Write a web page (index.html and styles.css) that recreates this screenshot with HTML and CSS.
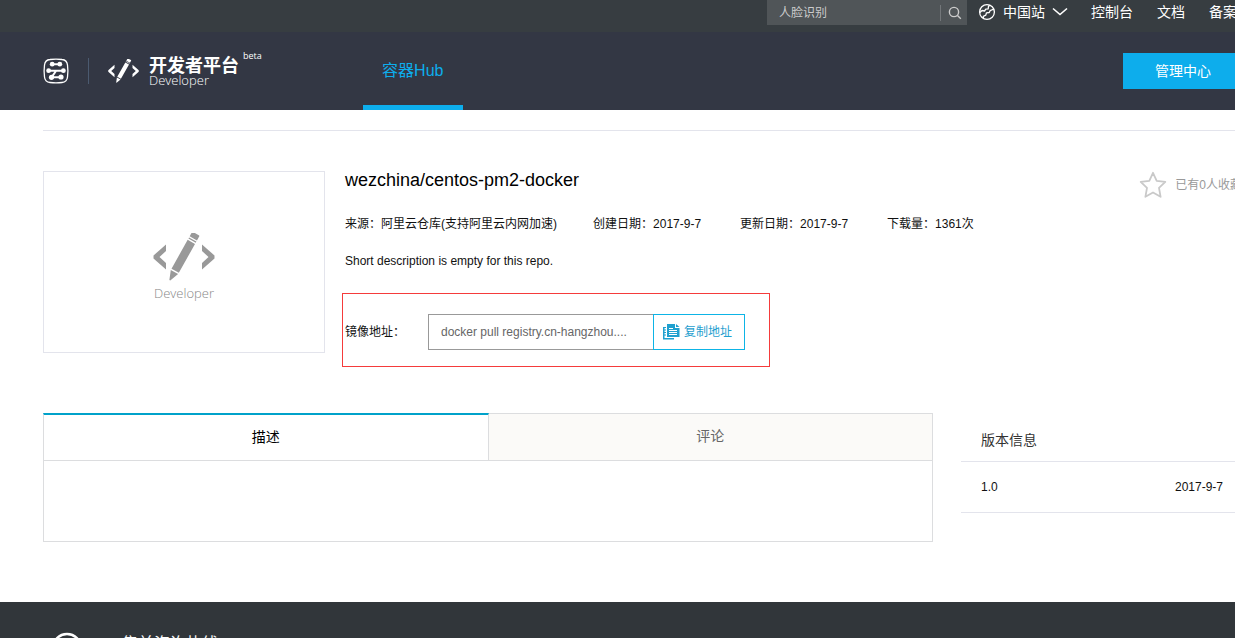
FILE: index.html
```html
<!DOCTYPE html>
<html lang="zh-CN">
<head>
<meta charset="utf-8">
<title>容器Hub - 开发者平台</title>
<link rel="stylesheet" href="styles.css">
</head>
<body>
<svg class="defs" aria-hidden="true">
  <symbol id="dev-mark" viewBox="0 0 62 48">
    <path d="M13 11.500v6.500L6.500 24l6.500 6v6.500L.5 25.500v-3zM49 11.500v6.500l6.500 6-6.500 6v6.500l12.500-11v-3z"/>
    <g transform="translate(42.500 1.500) rotate(29.300)">
      <path d="M-4.200 0q0-1 1-1h6.400q1 0 1 1V4.500h-8.400zM-4.200 5.700h8.400v1.300h-8.400zM-4.200 8.500h8.400v33h-8.400zM-4.200 43h8.400L.5 52.500h-1z"/>
    </g>
  </symbol>
</svg>
<div class="page">
  <div class="topbar">
    <form class="search">
      <input class="search-input" type="text" placeholder="人脸识别" aria-label="搜索">
      <button class="search-button" type="button" aria-label="搜索">
        <svg width="14" height="14" viewBox="0 0 14 14" fill="none" stroke="currentColor" stroke-width="1.400"><circle cx="6" cy="6" r="4.600"/><path d="M9.500 9.500l3.300 3.300"/></svg>
      </button>
    </form>
    <nav class="topnav">
      <a class="site" href="#">
        <svg width="18" height="18" viewBox="0 0 18 18" fill="none" stroke="currentColor" stroke-width="1.300" stroke-linejoin="round"><circle cx="9" cy="9" r="7.400"/><path d="M2 9.500l2-2L6.500 8l1.300-1.800 2.400-.4.300-2.600 1.500-.7M5.500 15.700l-.2-2.400 2.500-1.200.7-2.300 2.800-.3.800-1.800 3.900-1.700"/></svg>
        <span>中国站</span>
        <svg width="16" height="10" viewBox="0 0 16 10" fill="none" stroke="currentColor" stroke-width="1.600"><path d="M1 1.500l7 6 7-6"/></svg>
      </a>
      <a href="#">控制台</a>
      <a href="#">文档</a>
      <a href="#">备案</a>
    </nav>
  </div>
  <header class="header">
    <a class="cloud" href="#" aria-label="阿里云">
      <svg width="26" height="26" viewBox="0 0 26 26" fill="none" stroke="currentColor" stroke-linecap="round"><path d="M7 1.500Q13 .7 19 1.500q5 .5 5.500 5.500.8 6 0 12-.5 5-5.500 5.500-6 .8-12 0-5-.5-5.500-5.500-.8-6 0-12Q2 2 7 1.500z" stroke-width="1.300"/><path d="M9.200 6.200h7.600M5.500 12.700h15M13 13l-4.500 6.300M9 19.300h8.500" stroke-width="2"/><g fill="currentColor" stroke="none"><circle cx="9.200" cy="6.200" r="2.400"/><circle cx="16.800" cy="6.200" r="2.400"/><circle cx="5.600" cy="12.700" r="2.400"/><circle cx="20.400" cy="12.700" r="2.400"/><circle cx="8.500" cy="19.300" r="2.600"/><circle cx="18" cy="19" r="2.600"/></g></svg>
    </a>
    <a class="brand" href="#">
      <svg class="brand-mark" width="31" height="24"><use href="#dev-mark"/></svg>
      <span class="brand-text"><b>开发者平台</b><span class="brand-sub">Developer</span></span>
      <sup class="beta">beta</sup>
    </a>
    <nav class="mainnav"><a class="mainnav-item" href="#">容器Hub</a></nav>
    <a class="manage" href="#">管理中心</a>
  </header>
  <main class="main">
    <section class="repo">
      <div class="thumb">
        <svg width="62" height="48"><use href="#dev-mark"/></svg>
        <span>Developer</span>
      </div>
      <div class="info">
        <h1>wezchina/centos-pm2-docker</h1>
        <div class="meta">
          <span>来源：<span>阿里云仓库(支持阿里云内网加速)</span></span>
          <span>创建日期：<time>2017-9-7</time></span>
          <span>更新日期：<time>2017-9-7</time></span>
          <span>下载量：<span>1361次</span></span>
        </div>
        <p class="desc">Short description is empty for this repo.</p>
        <div class="address">
          <label for="address">镜像地址：</label>
          <input id="address" type="text" readonly value="docker pull registry.cn-hangzhou....">
          <button class="copy" type="button">
            <svg width="17" height="16" viewBox="0 0 17 16" fill="currentColor"><path d="M0 3h3v1H1.500v1.500H3v1H1.500V8H3v1H1.500v1.500H3v1H1.500V14H11v1.500H0zM0 3h1.500v12H0zM4 0h8v4h4.500v9H4zM13 0l3.500 3H13z"/><path d="M6 4.500h4M6 6.500h8M6 8.500h8M6 10.500h8" stroke="#fff"/></svg>
            <span>复制地址</span>
          </button>
        </div>
      </div>
      <button class="favorite" type="button">
        <svg width="28" height="28" viewBox="0 0 28 28" fill="none" stroke="#c9c9c9" stroke-width="1.800" stroke-linejoin="round"><path d="M14 1.800l3.700 8 8.600 1.100-6.300 6 1.600 8.900-7.600-4.300-7.600 4.300L8 16.900l-6.300-6 8.600-1.100z"/></svg>
        <span>已有0人收藏</span>
      </button>
    </section>
    <div class="columns">
      <section class="detail">
        <div class="tabs" role="tablist">
          <button class="tab active" role="tab" aria-selected="true" type="button">描述</button>
          <button class="tab" role="tab" aria-selected="false" type="button">评论</button>
        </div>
        <div class="panel" role="tabpanel"></div>
      </section>
      <aside class="versions">
        <h2>版本信息</h2>
        <table><tbody><tr><td>1.0</td><td class="date">2017-9-7</td></tr></tbody></table>
      </aside>
    </div>
  </main>
  <footer class="footer">
    <svg width="32" height="32" viewBox="0 0 32 32" fill="none" stroke="currentColor" stroke-width="2.500"><circle cx="16" cy="16" r="14"/><path d="M11 10c-2 6 4 13 11 12l1-3-4-2-2 2-4-5 2-2-2-4z"/></svg>
    <span>售前咨询热线</span>
  </footer>
</div>
</body>
</html>
```

FILE: styles.css
```css
* { box-sizing: border-box; }
html { height: 100%; overflow: hidden; }
body {
  height: 100%;
  margin: 0;
  overflow: hidden;
  background: #fff;
  color: #111;
  font: 12px/20px "Liberation Sans", Arial, "Noto Sans CJK SC", sans-serif;
}
a { color: inherit; text-decoration: none; }
button, input { font: inherit; border-radius: 0; margin: 0; }
button { cursor: pointer; white-space: nowrap; }
h1, h2, p { margin: 0; font-weight: normal; }
svg { display: block; flex: none; }
.defs { position: absolute; width: 0; height: 0; }
.page { min-width: 1286px; white-space: nowrap; }

.topbar {
  display: flex;
  justify-content: flex-end;
  align-items: flex-start;
  height: 32px;
  padding-right: 49px;
  background: #373d41;
  color: #fff;
}
.search { display: flex; align-items: center; width: 200px; height: 25px; background: #505558; }
.search-input { flex: 1; min-width: 0; height: 24px; padding: 0 12px; border: 0; outline: 0; background: none; color: #ccc; }
.search-input::placeholder { color: #ccc; opacity: 1; }
.search-button { display: flex; align-items: center; height: 16px; padding: 0 5px 0 7px; border: 0; border-left: 1px solid #73777a; background: none; color: #ccc; }
.topnav { display: flex; gap: 24px; margin-left: 11px; font-size: 14px; line-height: 24px; }
.site { display: flex; align-items: center; gap: 7px; margin-right: -1px; }

.header { display: flex; align-items: center; height: 78px; padding: 0 43px; background: #333744; color: #fff; }
.cloud { padding-right: 19px; border-right: 1px solid #4b5a70; }
.brand { display: flex; align-items: center; gap: 10px; margin-left: 19px; }
.brand-mark { fill: #fff; }
.brand-text { display: flex; flex-direction: column; font-size: 18px; line-height: 20px; }
.brand-sub, .thumb span { font: 300 13px/14px "Open Sans", "Noto Sans", sans-serif; }
.brand-sub { margin-top: -3px; color: #fff; }
.beta { align-self: flex-start; margin: -5px 0 0 -6px; font: 9px/10px "Open Sans", sans-serif; }
.mainnav { align-self: stretch; display: flex; margin-left: 101px; }
.mainnav-item { width: 100px; padding-top: 5px; border-bottom: 5px solid #0dadec; color: #0dadec; font-size: 16px; line-height: 68px; text-align: center; }
.manage { margin-left: auto; padding: 0 32px; background: #0dadec; font-size: 14px; line-height: 36px; }

.main { padding: 20px 43px 60px; }
.repo { display: flex; align-items: flex-start; padding: 40px 0 60px; border-top: 1px solid #e3e4ec; }
.thumb { display: flex; flex-direction: column; align-items: center; justify-content: center; gap: 5px; width: 282px; height: 182px; padding-top: 9px; border: 1px solid #e3e4ec; color: #888; fill: #999; }
.info { flex: 1; padding-left: 20px; }
.info h1 { font-size: 18px; line-height: 18px; color: #000; }
.meta { display: flex; gap: 36px; margin-top: 25px; }
.meta time { display: inline-block; min-width: 51px; }
.desc { margin-top: 17px; }
.address { position: relative; display: flex; align-items: center; width: 400px; margin-top: 43px; }
.address::before { content: ""; position: absolute; inset: -21px -25px -17px -3px; border: 1px solid #f53b3b; pointer-events: none; }
.address label { width: 83px; }
.address input { flex: 1; min-width: 0; height: 36px; padding: 0 12px; border: 1px solid #999; outline: 0; background: #fff; color: #666; }
.copy { display: flex; align-items: center; gap: 4px; height: 36px; margin-left: -1px; padding: 0 12px 0 9px; border: 1px solid #0db4e6; background: #fff; color: #1fa0cf; }
.favorite { display: flex; align-items: center; gap: 8px; padding: 0 1px 0 0; border: 0; background: none; color: #999; }

.columns { display: flex; align-items: flex-start; gap: 28px; }
.detail { flex: 1; }
.tabs { display: flex; border-bottom: 1px solid #dcdddf; }
.tab { flex: 1; height: 47px; padding: 0 0 2px; border: 0 solid #dcdddf; border-width: 1px 1px 0 0; background: #fbfaf8; color: #666; font-size: 14px; }
.tab.active { border-width: 2px 1px 0; border-top-color: #00a2ca; background: #fff; color: #000; }
.panel { height: 81px; border: 1px solid #dcdddf; border-top: 0; }
.versions { width: 282px; }
.versions h2 { padding: 17px 20px 11px; border-bottom: 1px solid #e3e4ec; color: #333; font-size: 14px; line-height: 20px; }
.versions table { width: 100%; border-collapse: collapse; }
.versions td { height: 50px; padding: 0 20px; border-bottom: 1px solid #e3e4ec; }
.versions .date { text-align: right; }

.footer { display: flex; gap: 39px; padding: 30px 51px; background: #31363a; color: #fff; font-size: 16px; line-height: 24px; }
```
